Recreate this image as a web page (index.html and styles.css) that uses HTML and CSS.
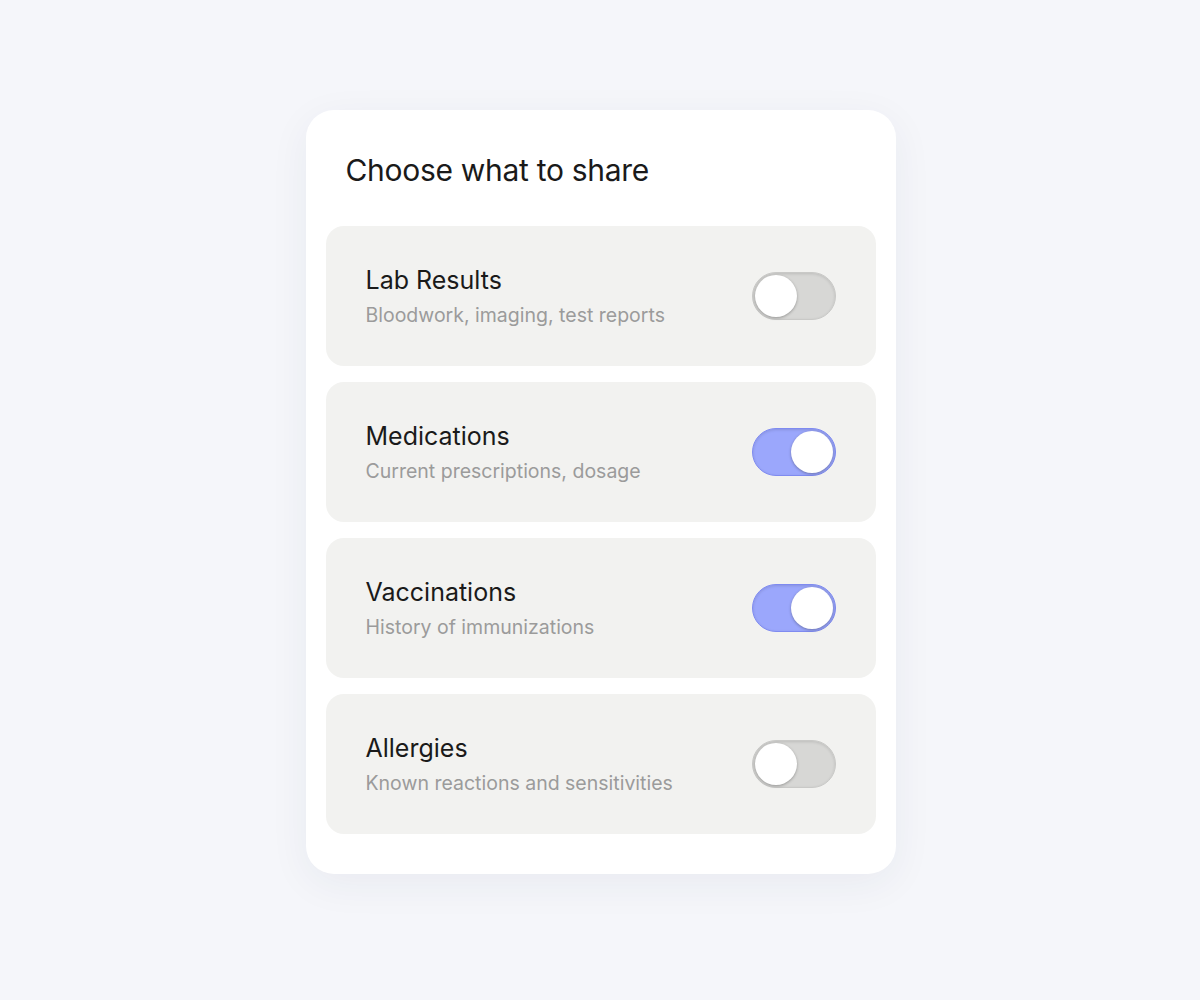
FILE: index.html
```html
<!doctype html>
<html lang="en">
  <head>
    <meta charset="UTF-8" />
    <title>Choose what to share</title>
    <link rel="stylesheet" href="styles.css">
  </head>
  <body>
    <div class="share-card">
      <h1>Choose what to share</h1>
      <div class="share-list">
        <div class="share-row">
          <div class="share-text">
            <h2>Lab Results</h2>
            <p>Bloodwork, imaging, test reports</p>
          </div>
          <span class="toggle"><span class="knob"></span></span>
        </div>
        <div class="share-row">
          <div class="share-text">
            <h2>Medications</h2>
            <p>Current prescriptions, dosage</p>
          </div>
          <span class="toggle on"><span class="knob"></span></span>
        </div>
        <div class="share-row">
          <div class="share-text">
            <h2>Vaccinations</h2>
            <p>History of immunizations</p>
          </div>
          <span class="toggle on"><span class="knob"></span></span>
        </div>
        <div class="share-row">
          <div class="share-text">
            <h2>Allergies</h2>
            <p>Known reactions and sensitivities</p>
          </div>
          <span class="toggle"><span class="knob"></span></span>
        </div>
      </div>
    </div>
  </body>
</html>
```

FILE: styles.css
```css
body,
h1,
h2,
p {
  margin: 0;
  padding: 0;
}

body {
  font-family: Inter, "Noto Sans", sans-serif;
  background-color: #f5f6fa;
  color: #1a1a1a;
  display: flex;
  justify-content: center;
  align-items: flex-start;
  height: 1000px;
  padding-left: 1px;
}

.share-card {
  margin-top: 110px;
  width: 590px;
  box-sizing: border-box;
  background: #fff;
  border-radius: 28px;
  padding: 40px 20px 40px;
  box-shadow: 0 10px 40px rgba(40, 50, 90, 0.06);
}

h1 {
  font-size: 30px;
  font-weight: 400;
  letter-spacing: -0.3px;
  line-height: 40px;
  margin: 0 0 36px 20px;
  color: #1a1a1a;
}

.share-list {
  display: flex;
  flex-direction: column;
  gap: 16px;
}

.share-row {
  height: 140px;
  box-sizing: border-box;
  background: #f2f2f0;
  border-radius: 18px;
  padding: 0 40px;
  display: flex;
  align-items: center;
  justify-content: space-between;
}

.share-text h2 {
  font-size: 25px;
  font-weight: 400;
  line-height: 30px;
  color: #1a1a1a;
}

.share-text p {
  margin-top: 7px;
  font-size: 19.5px;
  line-height: 26px;
  color: #9b9b9b;
}

.toggle {
  width: 84px;
  height: 48px;
  box-sizing: border-box;
  border-radius: 24px;
  background: #d7d7d5;
  border: 1px solid #c9c9c7;
  box-shadow: inset 0 1px 3px rgba(0, 0, 0, 0.12);
  display: flex;
  align-items: center;
  padding: 0 2px;
}

.toggle.on {
  background: #9ba7fc;
  border-color: #7f8bf0;
  justify-content: flex-end;
}

.knob {
  width: 42px;
  height: 42px;
  border-radius: 50%;
  background: #fff;
  box-shadow: 0 1px 3px rgba(0, 0, 0, 0.3);
}
```
